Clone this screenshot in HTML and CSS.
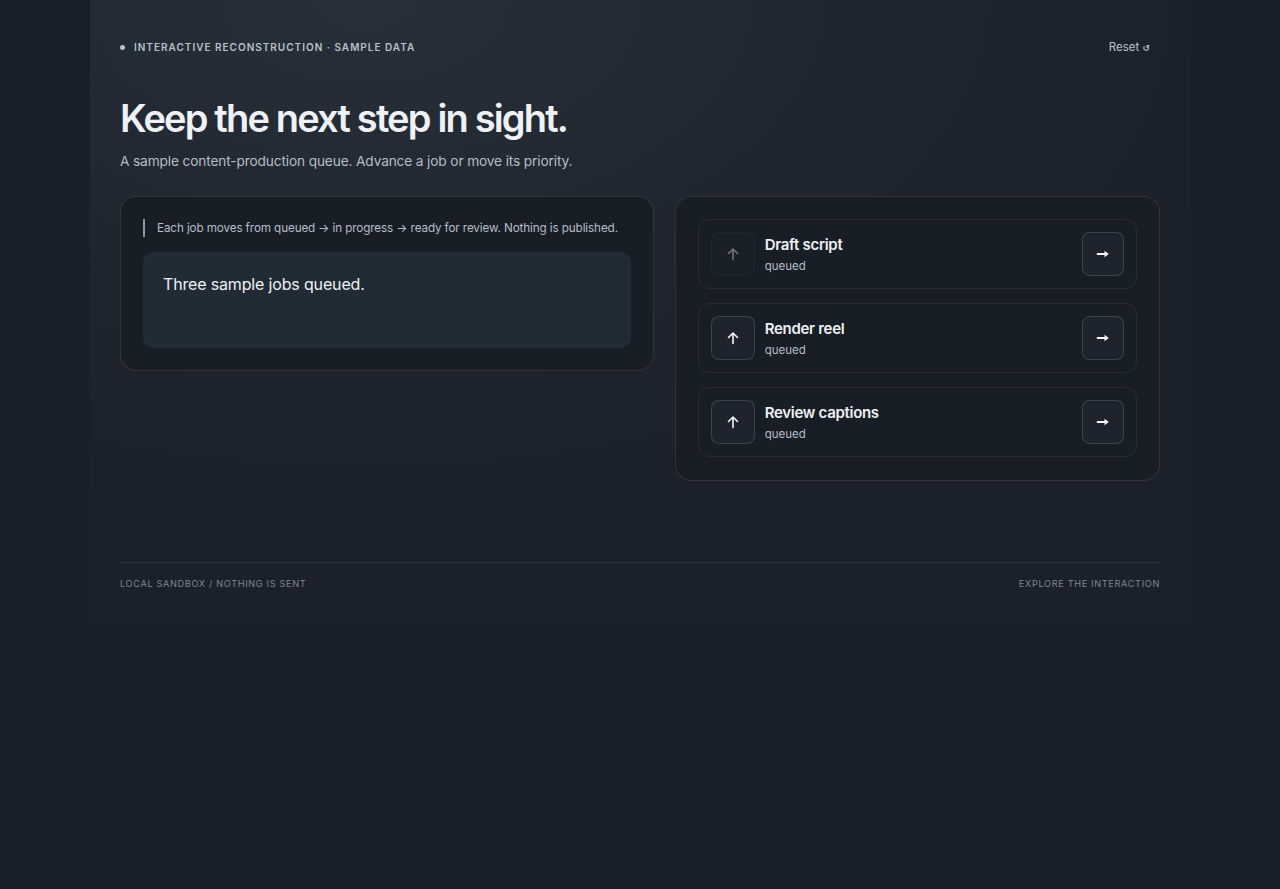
FILE: index.html
```html
<!DOCTYPE html>
<html lang="en">
<head>
    <meta charset="UTF-8">
    <meta name="viewport" content="width=device-width, initial-scale=1.0">
    <title>Job Queue</title>
    <link rel="stylesheet" href="styles.css">
</head>
<body>
    <main class="shell">
        <header class="topbar">
            <div class="eyebrow"><span class="dot"></span>Interactive reconstruction · Sample data</div>
            <button class="reset-btn">Reset <span class="reset-icon">↺</span></button>
        </header>
        <h1>Keep the next step in sight.</h1>
        <p class="lede">A sample content-production queue. Advance a job or move its priority.</p>
        <div class="grid">
            <section class="panel">
                <p class="note">Each job moves from queued → in progress → ready for review. Nothing is published.</p>
                <div class="status">Three sample jobs queued.</div>
            </section>
            <section class="panel queue">
                <div class="job">
                    <button class="icon-btn" disabled>
                        <svg viewBox="0 0 16 16" width="16" height="16"><path d="M8 13.5V3M3.5 7.5L8 3l4.5 4.5" fill="none" stroke="currentColor" stroke-width="1.6" stroke-linecap="round" stroke-linejoin="round"/></svg>
                    </button>
                    <div class="job-info">
                        <div class="job-title">Draft script</div>
                        <div class="job-state">queued</div>
                    </div>
                    <button class="icon-btn next">
                        <svg viewBox="0 0 16 16" width="16" height="16"><path d="M2.5 8h8" stroke="currentColor" stroke-width="1.8" stroke-linecap="round"/><path d="M9.5 4.8L13.8 8l-4.3 3.2z" fill="currentColor"/></svg>
                    </button>
                </div>
                <div class="job">
                    <button class="icon-btn">
                        <svg viewBox="0 0 16 16" width="16" height="16"><path d="M8 13.5V3M3.5 7.5L8 3l4.5 4.5" fill="none" stroke="currentColor" stroke-width="1.6" stroke-linecap="round" stroke-linejoin="round"/></svg>
                    </button>
                    <div class="job-info">
                        <div class="job-title">Render reel</div>
                        <div class="job-state">queued</div>
                    </div>
                    <button class="icon-btn next">
                        <svg viewBox="0 0 16 16" width="16" height="16"><path d="M2.5 8h8" stroke="currentColor" stroke-width="1.8" stroke-linecap="round"/><path d="M9.5 4.8L13.8 8l-4.3 3.2z" fill="currentColor"/></svg>
                    </button>
                </div>
                <div class="job">
                    <button class="icon-btn">
                        <svg viewBox="0 0 16 16" width="16" height="16"><path d="M8 13.5V3M3.5 7.5L8 3l4.5 4.5" fill="none" stroke="currentColor" stroke-width="1.6" stroke-linecap="round" stroke-linejoin="round"/></svg>
                    </button>
                    <div class="job-info">
                        <div class="job-title">Review captions</div>
                        <div class="job-state">queued</div>
                    </div>
                    <button class="icon-btn next">
                        <svg viewBox="0 0 16 16" width="16" height="16"><path d="M2.5 8h8" stroke="currentColor" stroke-width="1.8" stroke-linecap="round"/><path d="M9.5 4.8L13.8 8l-4.3 3.2z" fill="currentColor"/></svg>
                    </button>
                </div>
            </section>
        </div>
        <footer class="footer">
            <span>Local sandbox / nothing is sent</span>
            <span>Explore the interaction</span>
        </footer>
    </main>
</body>
</html>
```

FILE: styles.css
```css
body {
    margin: 0;
    background: #1a2029;
    font-family: Inter, "Noto Sans", sans-serif;
    color: #e9edf2;
    min-height: 889px;
}
.shell {
    width: 1040px;
    margin-left: 90px;
    padding: 30px 30px 30px;
    background: radial-gradient(ellipse 900px 520px at 25% 0%, #27303a 0%, #1f262f 55%, #1b212a 100%);
}
.topbar {
    display: flex;
    justify-content: space-between;
    align-items: center;
    height: 34px;
}
.eyebrow {
    display: flex;
    align-items: center;
    gap: 9px;
    font-size: 10px;
    font-weight: 600;
    letter-spacing: 0.1em;
    text-transform: uppercase;
    color: #b9c1cc;
}
.dot {
    width: 5px;
    height: 5px;
    border-radius: 50%;
    background: #b9c1cc;
}
.reset-btn {
    background: none;
    border: none;
    color: #b9c1cc;
    font-family: inherit;
    font-size: 11.5px;
    padding: 6px 10px;
    cursor: pointer;
}
.reset-icon {
    font-family: "DejaVu Sans", sans-serif;
    font-size: 9px;
    font-weight: 700;
}
h1 {
    margin: 29px 0 0;
    font-size: 38px;
    font-weight: 600;
    letter-spacing: -0.048em;
    line-height: 50px;
    color: #eef1f5;
}
.lede {
    margin: 10px 0 0;
    font-size: 13.7px;
    color: #b5bdc8;
    letter-spacing: -0.01em;
}
.grid {
    display: grid;
    grid-template-columns: 1.1fr 1fr;
    gap: 21px;
    margin-top: 27px;
    align-items: start;
}
.panel {
    background: #181e25;
    border: 1px solid rgba(255, 255, 255, 0.1);
    border-radius: 16px;
    padding: 22px;
}
.note {
    margin: 0;
    border-left: 2px solid #8d97a5;
    padding: 2px 0 2px 12px;
    font-size: 11.7px;
    color: #b5bdc8;
    letter-spacing: -0.01em;
}
.status {
    margin-top: 15px;
    background: #212b36;
    border-radius: 10px;
    padding: 22px 20px 20px;
    height: 54px;
    font-size: 16px;
    color: #eef1f5;
    letter-spacing: -0.01em;
}
.queue {
    display: flex;
    flex-direction: column;
    gap: 14px;
    padding-bottom: 23px;
}
.job {
    display: flex;
    align-items: center;
    gap: 10px;
    padding: 12px;
    border: 1px solid rgba(255, 255, 255, 0.07);
    border-radius: 12px;
}
.job-info {
    flex: 1;
}
.job-title {
    font-size: 15px;
    font-weight: 600;
    color: #eef1f5;
    letter-spacing: -0.02em;
}
.job-state {
    margin-top: 5px;
    font-size: 11.5px;
    color: #b5bdc8;
}
.icon-btn {
    width: 44px;
    height: 44px;
    border-radius: 8px;
    border: 1px solid rgba(255, 255, 255, 0.14);
    background: #1d242d;
    color: #f3f5f8;
    display: flex;
    align-items: center;
    justify-content: center;
    padding: 0;
    cursor: pointer;
}
.icon-btn.next {
    width: 42px;
}
.icon-btn:disabled {
    opacity: 0.4;
    border-color: rgba(255, 255, 255, 0.08);
    cursor: default;
}
.footer {
    margin-top: 81px;
    border-top: 1px solid rgba(255, 255, 255, 0.08);
    padding-top: 15px;
    display: flex;
    justify-content: space-between;
    font-size: 9.2px;
    letter-spacing: 0.07em;
    text-transform: uppercase;
    color: #7d8692;
}
```
